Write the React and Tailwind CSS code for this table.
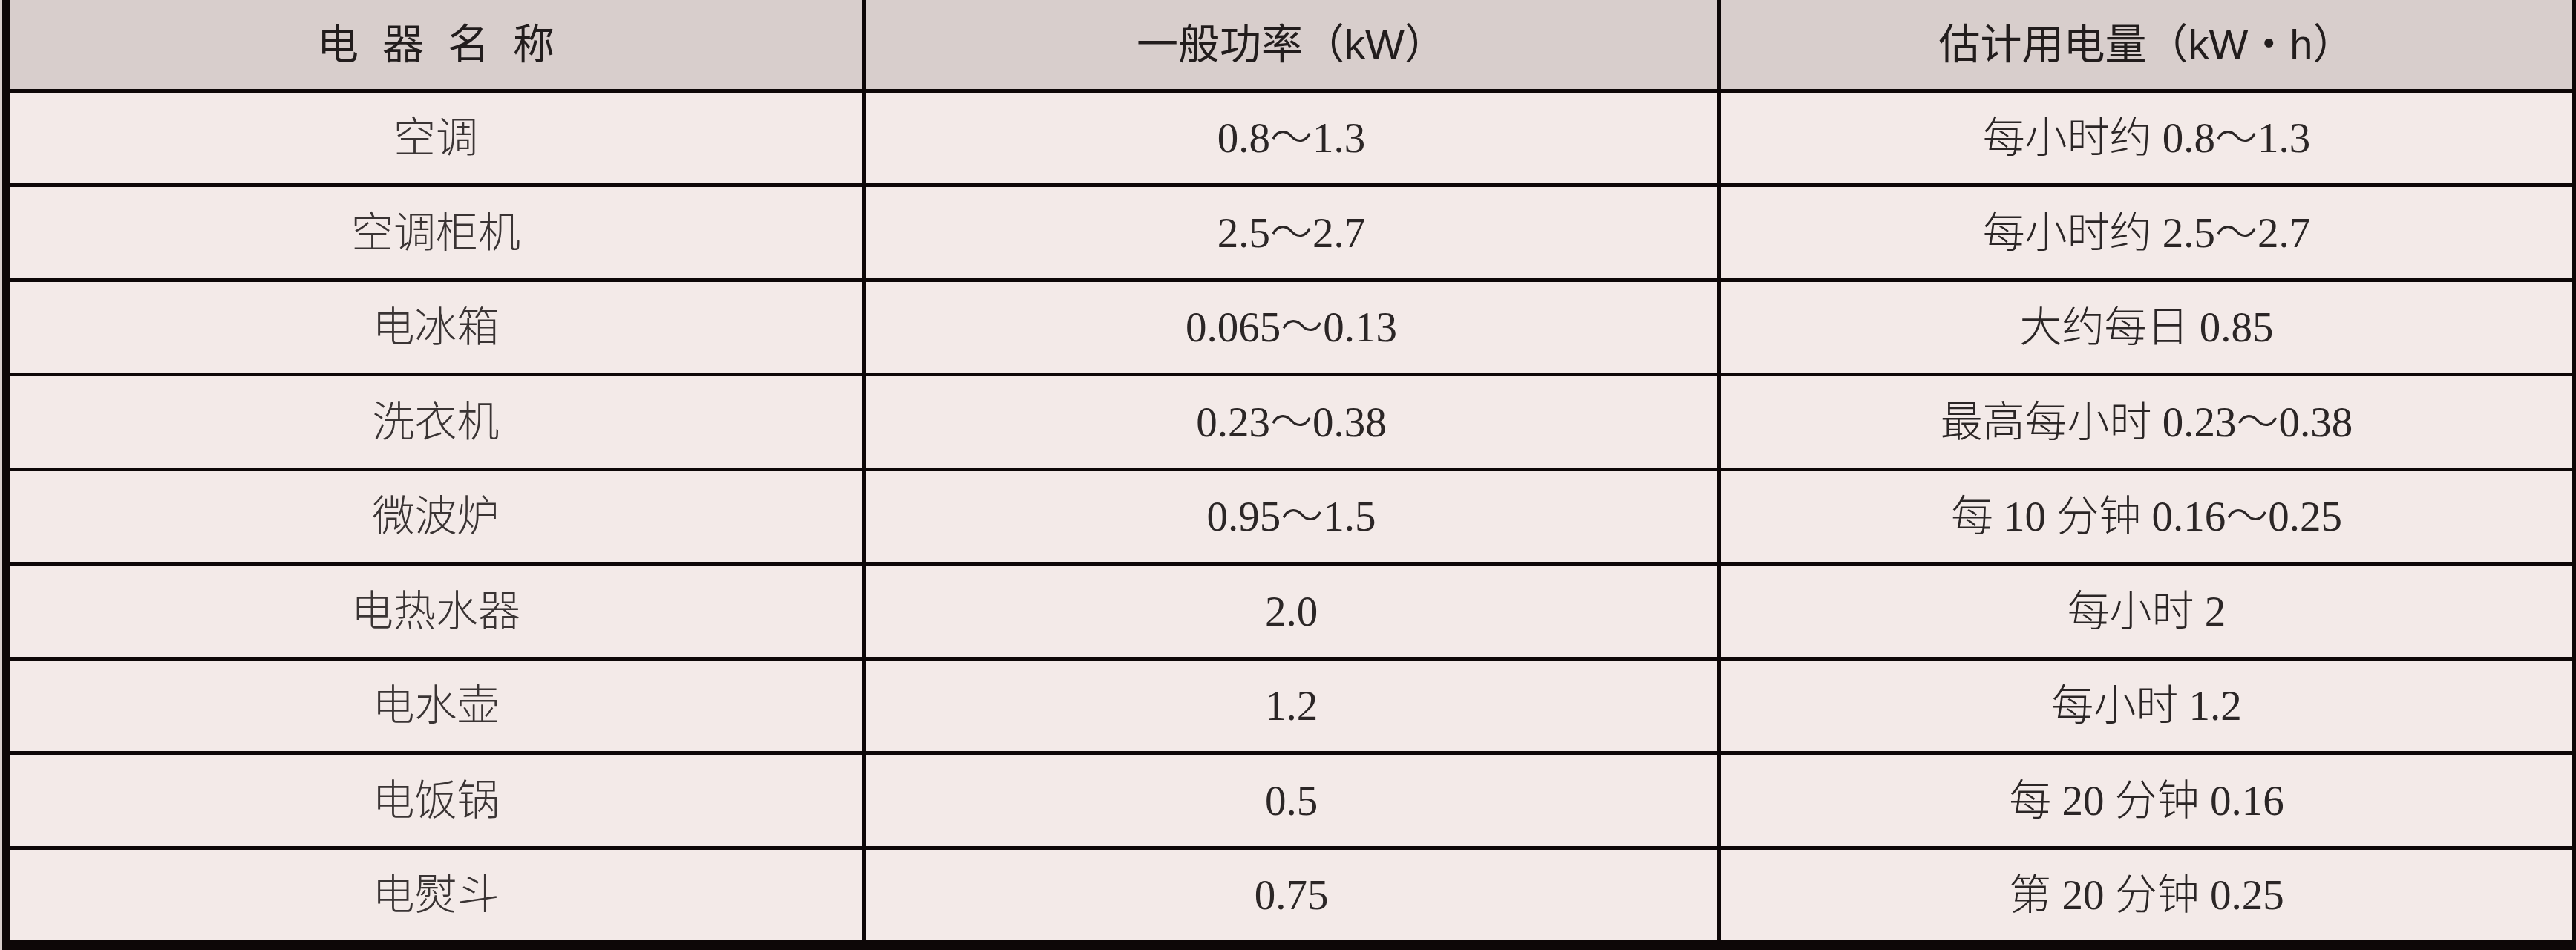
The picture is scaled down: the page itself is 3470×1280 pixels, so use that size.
import React from "react";

const rows = [
  ["空调", "0.8～1.3", "每小时约 0.8～1.3"],
  ["空调柜机", "2.5～2.7", "每小时约 2.5～2.7"],
  ["电冰箱", "0.065～0.13", "大约每日 0.85"],
  ["洗衣机", "0.23～0.38", "最高每小时 0.23～0.38"],
  ["微波炉", "0.95～1.5", "每 10 分钟 0.16～0.25"],
  ["电热水器", "2.0", "每小时 2"],
  ["电水壶", "1.2", "每小时 1.2"],
  ["电饭锅", "0.5", "每 20 分钟 0.16"],
  ["电熨斗", "0.75", "第 20 分钟 0.25"],
];

const headCell =
  "flex items-center justify-center bg-[#d8cecc] text-[56px] font-normal text-[#221d1d] [font-family:'Liberation_Sans','Noto_Sans_CJK_SC',sans-serif]";
const bodyCell =
  "flex items-center justify-center bg-[#f3eae8] text-[57px] font-light text-[#2b2626] [font-family:'Liberation_Serif','Noto_Sans_CJK_SC',serif]";

export default function App() {
  return (
    <div className="w-[3470px] h-[1280px] bg-[#d8cecc]">
      <div className="ml-[3px] h-full bg-[#0d0707] pl-[10px] pr-[5px] pb-[13px]">
        <div className="grid h-full grid-cols-[1148px_1147px_minmax(0,1fr)] grid-rows-[120px_repeat(9,minmax(0,1fr))] gap-[5px]">
          <div className={headCell}>
            <span className="flex gap-[32px]">
              <span>电</span>
              <span>器</span>
              <span>名</span>
              <span>称</span>
            </span>
          </div>
          <div className={headCell}>一般功率（kW）</div>
          <div className={headCell}>估计用电量（kW・h）</div>
          {rows.map((r, i) => (
            <React.Fragment key={i}>
              <div className={bodyCell + " text-[#3a3434]"}>{r[0]}</div>
              <div className={bodyCell}>{r[1]}</div>
              <div className={bodyCell}>{r[2]}</div>
            </React.Fragment>
          ))}
        </div>
      </div>
    </div>
  );
}
